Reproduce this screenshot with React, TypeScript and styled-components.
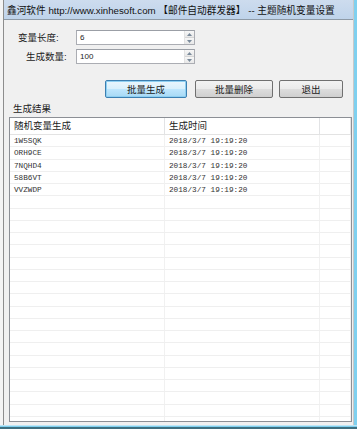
import styled, { createGlobalStyle, css } from 'styled-components'

const GlobalStyle = createGlobalStyle`
  html, body {
    margin: 0;
    padding: 0;
    background: #ffffff;
  }
  * {
    box-sizing: border-box;
  }
`

const cjk = `'Liberation Sans', 'Noto Sans CJK SC', sans-serif`
const mono = `'Liberation Mono', 'Noto Sans CJK SC', monospace`

const Window = styled.div`
  width: 357px;
  height: 429px;
  display: flex;
  flex-direction: column;
  overflow: hidden;
  background: #f0f0f0;
  font-family: ${cjk};
  color: #1b1b1b;
`

const Frame = styled.div`
  flex: 1;
  display: flex;
  min-height: 0;
`

const LeftEdge = styled.div`
  width: 4px;
  background: #f4f4f4;
  border-right: 1px solid #8d8d8d;
`

const RightEdge = styled.div`
  width: 4px;
  background: #7fd0ef;
  border-left: 1px solid #c9c9c9;
`

const Main = styled.div`
  flex: 1;
  display: flex;
  flex-direction: column;
  min-width: 0;
`

const TitleBar = styled.div`
  height: 20px;
  padding-left: 3px;
  display: flex;
  align-items: center;
  background: linear-gradient(#cddcee, #bfd3ea);
  border-bottom: 1px solid #8e9aa6;
  font-size: 9.7px;
  color: #111;
  white-space: nowrap;
`

const Body = styled.div`
  flex: 1;
  display: flex;
  flex-direction: column;
  padding: 10px 1px 3px 0;
  min-height: 0;
`

const FormGrid = styled.div`
  display: grid;
  grid-template-columns: 72px 119px;
  row-gap: 4px;
`

const Label = styled.div<{ $indent: number }>`
  height: 15px;
  line-height: 15px;
  padding-left: ${p => p.$indent}px;
  font-size: 9.5px;
  white-space: nowrap;
`

const SpinBox = styled.div`
  height: 15px;
  display: flex;
  background: #fff;
  border: 1px solid #abadb3;
  border-top-color: #9b9fa6;
`

const SpinText = styled.div`
  flex: 1;
  padding-left: 3px;
  line-height: 13px;
  font-size: 8px;
`

const SpinButtons = styled.div`
  width: 10px;
  display: flex;
  flex-direction: column;
  border-left: 1px solid #e2e2e2;
`

const SpinHalf = styled.div<{ $down?: boolean }>`
  flex: 1;
  display: flex;
  align-items: center;
  justify-content: center;
  background: linear-gradient(#f7f7f7, #e8e8e8);
  ${p => p.$down && css`border-top: 1px solid #d6d6d6;`}
`

const ButtonRow = styled.div`
  display: flex;
  margin-top: 16px;
  padding-left: 101px;
`

const Button = styled.div<{ $w: number; $left?: number; $primary?: boolean }>`
  flex: none;
  width: ${p => p.$w}px;
  height: 18px;
  margin-left: ${p => p.$left ?? 0}px;
  display: flex;
  align-items: center;
  justify-content: center;
  font-size: 9.5px;
  border-radius: 2px;
  border: 1px solid #707070;
  background: linear-gradient(#f3f3f3 0%, #ebebeb 48%, #dddddd 52%, #cfcfcf 100%);
  ${p => p.$primary && css`
    border-color: #3c7fb1;
    box-shadow: inset 0 0 0 1px #8fd0f2;
    background: linear-gradient(#eaf6fd 0%, #d9f0fc 48%, #bee6fd 52%, #a7d9f5 100%);
  `}
`

const GroupLabel = styled.div`
  margin: 5px 0 2px 9px;
  height: 12px;
  line-height: 12px;
  font-size: 9.5px;
`

const ListView = styled.div`
  flex: 1;
  margin-left: 5px;
  border: 1px solid #8c8f95;
  background: #fff;
  overflow: hidden;
`

const GridRow = styled.div<{ $head?: boolean }>`
  display: grid;
  grid-template-columns: 155px 155px 1fr;
  height: ${p => (p.$head ? '17px' : '12.25px')};
  border-bottom: 1px solid ${p => (p.$head ? '#e3e3e3' : '#efefef')};
`

const HeadCell = styled.div`
  padding-left: 4px;
  line-height: 16px;
  font-size: 9.5px;
  border-right: 1px solid #e2e3e5;
  white-space: nowrap;
`

const Cell = styled.div`
  padding: 1px 0 0 4px;
  line-height: 11px;
  font-family: ${mono};
  font-size: 7.7px;
  color: #333;
  border-right: 1px solid #f1f1f1;
  white-space: nowrap;
`

const BottomEdge = styled.div`
  height: 4px;
  background: #7fd0ef;
  border-top: 1px solid #bfe5f5;
  border-bottom: 2px solid #3d6f80;
`

const Arrow = ({ up }: { up?: boolean }) => (
  <svg width="5" height="3" viewBox="0 0 5 3">
    <path d={up ? 'M0 3 L2.5 0 L5 3 Z' : 'M0 0 L2.5 3 L5 0 Z'} fill="#7a8a9a" />
  </svg>
)

const Spin = ({ value }: { value: string }) => (
  <SpinBox>
    <SpinText>{value}</SpinText>
    <SpinButtons>
      <SpinHalf>
        <Arrow up />
      </SpinHalf>
      <SpinHalf $down>
        <Arrow />
      </SpinHalf>
    </SpinButtons>
  </SpinBox>
)

const results = ['1W5SQK', 'ORH9CE', '7NQHD4', '58B6VT', 'VVZWDP']
const emptyRows = 20

export default function App() {
  return (
    <>
      <GlobalStyle />
      <Window>
        <Frame>
          <LeftEdge />
          <Main>
            <TitleBar>鑫河软件 http://www.xinhesoft.com 【邮件自动群发器】 -- 主题随机变量设置</TitleBar>
            <Body>
              <FormGrid>
                <Label $indent={14}>变量长度:</Label>
                <Spin value="6" />
                <Label $indent={22}>生成数量:</Label>
                <Spin value="100" />
              </FormGrid>
              <ButtonRow>
                <Button $w={82} $primary>批量生成</Button>
                <Button $w={78} $left={8}>批量删除</Button>
                <Button $w={64} $left={6}>退出</Button>
              </ButtonRow>
              <GroupLabel>生成结果</GroupLabel>
              <ListView>
                <GridRow $head>
                  <HeadCell>随机变量生成</HeadCell>
                  <HeadCell>生成时间</HeadCell>
                  <HeadCell />
                </GridRow>
                {results.map(r => (
                  <GridRow key={r}>
                    <Cell>{r}</Cell>
                    <Cell>2018/3/7 19:19:20</Cell>
                    <Cell />
                  </GridRow>
                ))}
                {Array.from({ length: emptyRows }).map((_, i) => (
                  <GridRow key={'e' + i}>
                    <Cell />
                    <Cell />
                    <Cell />
                  </GridRow>
                ))}
              </ListView>
            </Body>
          </Main>
          <RightEdge />
        </Frame>
        <BottomEdge />
      </Window>
    </>
  )
}
